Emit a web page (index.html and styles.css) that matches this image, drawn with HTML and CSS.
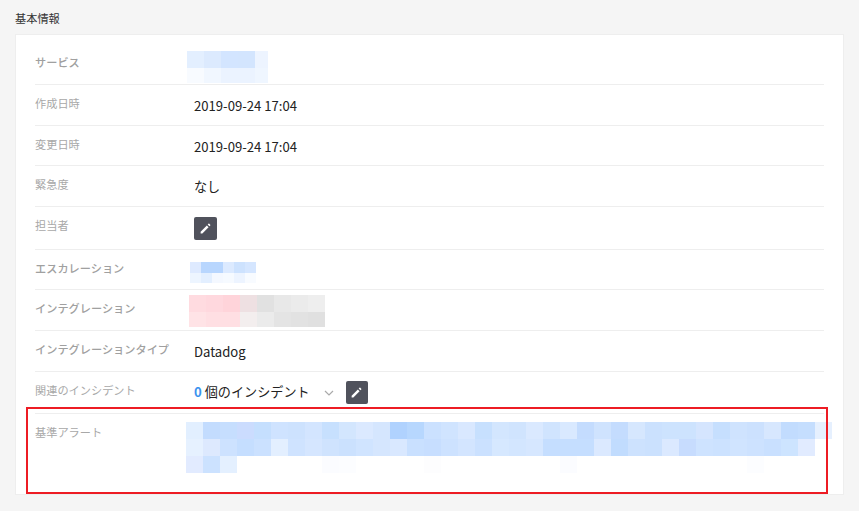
FILE: index.html
```html
<!DOCTYPE html>
<html lang="ja">
<head>
<meta charset="utf-8">
<title>基本情報</title>
<link rel="stylesheet" href="styles.css">
</head>
<body>
<h2 class="title">基本情報</h2>
<section class="card">
  <div class="row">
    <div class="label label-kana">サービス</div>
    <div class="value">
      <svg class="mosaic mosaic-service" width="81" height="32" viewBox="0 0 81 32" shape-rendering="crispEdges" aria-hidden="true">
        <rect x="0" y="0" width="17" height="17" fill="#e3efff"/><rect x="17" y="0" width="17" height="17" fill="#dceafe"/><rect x="34" y="0" width="17" height="17" fill="#d3e5ff"/><rect x="51" y="0" width="17" height="17" fill="#d3e5fe"/><rect x="68" y="0" width="13" height="17" fill="#edf4ff"/>
        <rect x="0" y="17" width="17" height="15" fill="#f8fbff"/><rect x="17" y="17" width="17" height="15" fill="#f1f7ff"/><rect x="34" y="17" width="17" height="15" fill="#ebf3ff"/><rect x="51" y="17" width="17" height="15" fill="#ebf3ff"/><rect x="68" y="17" width="13" height="15" fill="#eff6ff"/>
      </svg>
    </div>
  </div>
  <div class="row">
    <div class="label">作成日時</div>
    <div class="value value-text">2019-09-24 17:04</div>
  </div>
  <div class="row">
    <div class="label">変更日時</div>
    <div class="value value-text">2019-09-24 17:04</div>
  </div>
  <div class="row">
    <div class="label">緊急度</div>
    <div class="value value-text">なし</div>
  </div>
  <div class="row">
    <div class="label">担当者</div>
    <div class="value">
      <button class="edit" type="button" aria-label="編集">
        <svg width="13" height="13" viewBox="0 0 24 24" aria-hidden="true"><path fill="#fff" d="M3 21v-3.2L14.5 6.3l3.2 3.2L6.2 21zM16 4.8l1.6-1.6c.4-.4 1-.4 1.4 0l1.8 1.8c.4.4.4 1 0 1.4L19.2 8z"/></svg>
      </button>
    </div>
  </div>
  <div class="row">
    <div class="label label-kana">エスカレーション</div>
    <div class="value">
      <svg class="mosaic mosaic-escalation" width="66" height="21" viewBox="0 0 66 21" shape-rendering="crispEdges" aria-hidden="true">
        <rect x="0" y="0" width="11" height="11" fill="#deeaff"/><rect x="11" y="0" width="11" height="11" fill="#b8d6fe"/><rect x="22" y="0" width="11" height="11" fill="#b8d6fe"/><rect x="33" y="0" width="11" height="11" fill="#dceaff"/><rect x="44" y="0" width="11" height="11" fill="#cde2fe"/><rect x="55" y="0" width="11" height="11" fill="#d5e6ff"/>
        <rect x="0" y="11" width="11" height="10" fill="#edf5ff"/><rect x="11" y="11" width="11" height="10" fill="#e3efff"/><rect x="22" y="11" width="11" height="10" fill="#f4f8ff"/><rect x="33" y="11" width="11" height="10" fill="#f6faff"/><rect x="44" y="11" width="11" height="10" fill="#edf4ff"/><rect x="55" y="11" width="11" height="10" fill="#f8fbff"/>
      </svg>
    </div>
  </div>
  <div class="row">
    <div class="label label-kana">インテグレーション</div>
    <div class="value">
      <svg class="mosaic mosaic-integration" width="136" height="32" viewBox="0 0 136 32" shape-rendering="crispEdges" aria-hidden="true">
        <rect x="0" y="0" width="17" height="17" fill="#ffdbe0"/><rect x="17" y="0" width="17" height="17" fill="#ffd8de"/><rect x="34" y="0" width="17" height="17" fill="#ffd4da"/><rect x="51" y="0" width="17" height="17" fill="#eee0e2"/><rect x="68" y="0" width="17" height="17" fill="#e1e1e1"/><rect x="85" y="0" width="17" height="17" fill="#e8e8e8"/><rect x="102" y="0" width="17" height="17" fill="#ebebeb"/><rect x="119" y="0" width="17" height="17" fill="#eeeeee"/>
        <rect x="0" y="17" width="17" height="15" fill="#ffe3e6"/><rect x="17" y="17" width="17" height="15" fill="#ffdfe3"/><rect x="34" y="17" width="17" height="15" fill="#ffdfe3"/><rect x="51" y="17" width="17" height="15" fill="#f3eeee"/><rect x="68" y="17" width="17" height="15" fill="#ebebeb"/><rect x="85" y="17" width="17" height="15" fill="#e4e4e4"/><rect x="102" y="17" width="17" height="15" fill="#e2e2e2"/><rect x="119" y="17" width="17" height="15" fill="#e0e0e0"/>
      </svg>
    </div>
  </div>
  <div class="row">
    <div class="label label-kana">インテグレーションタイプ</div>
    <div class="value value-text">Datadog</div>
  </div>
  <div class="row row-related">
    <div class="label">関連のインシデント</div>
    <div class="value value-related">
      <span class="count">0</span>
      <span class="count-text">個のインシデント</span>
      <svg class="chevron" width="10" height="6" viewBox="0 0 10 6" aria-hidden="true"><path d="M1 1l4 4 4-4" fill="none" stroke="#aaa" stroke-width="1.2"/></svg>
      <button class="edit" type="button" aria-label="編集">
        <svg width="13" height="13" viewBox="0 0 24 24" aria-hidden="true"><path fill="#fff" d="M3 21v-3.2L14.5 6.3l3.2 3.2L6.2 21zM16 4.8l1.6-1.6c.4-.4 1-.4 1.4 0l1.8 1.8c.4.4.4 1 0 1.4L19.2 8z"/></svg>
      </button>
    </div>
  </div>
  <div class="row row-last">
    <div class="label">基準アラート</div>
    <div class="value">
      <svg class="mosaic mosaic-alert" width="646" height="51" viewBox="0 0 38 3" preserveAspectRatio="none" shape-rendering="crispEdges" aria-hidden="true">
        <g>
          <rect x="0" y="0" width="1" height="1" fill="#e2efff"/><rect x="1" y="0" width="1" height="1" fill="#c3dcfe"/><rect x="2" y="0" width="1" height="1" fill="#c6defe"/><rect x="3" y="0" width="1" height="1" fill="#cbdcfe"/><rect x="4" y="0" width="1" height="1" fill="#c5dffe"/><rect x="5" y="0" width="1" height="1" fill="#cfe3ff"/><rect x="6" y="0" width="1" height="1" fill="#cde2fe"/><rect x="7" y="0" width="1" height="1" fill="#d3e5ff"/><rect x="8" y="0" width="1" height="1" fill="#c7e0fe"/><rect x="9" y="0" width="1" height="1" fill="#d3e6fe"/><rect x="10" y="0" width="1" height="1" fill="#dbe9ff"/><rect x="11" y="0" width="1" height="1" fill="#d5e6fe"/><rect x="12" y="0" width="1" height="1" fill="#b0d2fe"/><rect x="13" y="0" width="1" height="1" fill="#b7d7fe"/><rect x="14" y="0" width="1" height="1" fill="#cbe1ff"/><rect x="15" y="0" width="1" height="1" fill="#d0e4ff"/><rect x="16" y="0" width="1" height="1" fill="#d9e8ff"/><rect x="17" y="0" width="1" height="1" fill="#c7e0fe"/><rect x="18" y="0" width="1" height="1" fill="#d3e6fe"/><rect x="19" y="0" width="1" height="1" fill="#d0e4fe"/><rect x="20" y="0" width="1" height="1" fill="#dae9ff"/><rect x="21" y="0" width="1" height="1" fill="#d0e4fe"/><rect x="22" y="0" width="1" height="1" fill="#d9e9ff"/><rect x="23" y="0" width="1" height="1" fill="#c4dcfe"/><rect x="24" y="0" width="1" height="1" fill="#cfe3fe"/><rect x="25" y="0" width="1" height="1" fill="#c4dcfe"/><rect x="26" y="0" width="1" height="1" fill="#d6e7fe"/><rect x="27" y="0" width="1" height="1" fill="#cbe1fe"/><rect x="28" y="0" width="1" height="1" fill="#cde3fe"/><rect x="29" y="0" width="1" height="1" fill="#cde3fe"/><rect x="30" y="0" width="1" height="1" fill="#d5e5fe"/><rect x="31" y="0" width="1" height="1" fill="#c6dffe"/><rect x="32" y="0" width="1" height="1" fill="#cfe3fe"/><rect x="33" y="0" width="1" height="1" fill="#cce1fe"/><rect x="34" y="0" width="1" height="1" fill="#d7e7fe"/><rect x="35" y="0" width="1" height="1" fill="#c2dcfe"/><rect x="36" y="0" width="1" height="1" fill="#c5defe"/><rect x="37" y="0" width="1" height="1" fill="#e6f0fe"/>
        </g>
        <g>
          <rect x="0" y="1" width="1" height="1" fill="#e6f1ff"/><rect x="1" y="1" width="1" height="1" fill="#dde9fe"/><rect x="2" y="1" width="1" height="1" fill="#cde2ff"/><rect x="3" y="1" width="1" height="1" fill="#c5deff"/><rect x="4" y="1" width="1" height="1" fill="#cbe1ff"/><rect x="5" y="1" width="1" height="1" fill="#e3efff"/><rect x="6" y="1" width="1" height="1" fill="#cfe3ff"/><rect x="7" y="1" width="1" height="1" fill="#d5e6ff"/><rect x="8" y="1" width="1" height="1" fill="#cfe3fe"/><rect x="9" y="1" width="1" height="1" fill="#cbe1fe"/><rect x="10" y="1" width="1" height="1" fill="#d0e4ff"/><rect x="11" y="1" width="1" height="1" fill="#d5e6fe"/><rect x="12" y="1" width="1" height="1" fill="#d9e8ff"/><rect x="13" y="1" width="1" height="1" fill="#c9e0ff"/><rect x="14" y="1" width="1" height="1" fill="#c7deff"/><rect x="15" y="1" width="1" height="1" fill="#cde2ff"/><rect x="16" y="1" width="1" height="1" fill="#d3e5ff"/><rect x="17" y="1" width="1" height="1" fill="#cbe1ff"/><rect x="18" y="1" width="1" height="1" fill="#d6e8ff"/><rect x="19" y="1" width="1" height="1" fill="#d3e6ff"/><rect x="20" y="1" width="1" height="1" fill="#d6e7ff"/><rect x="21" y="1" width="1" height="1" fill="#c5deff"/><rect x="22" y="1" width="1" height="1" fill="#c5deff"/><rect x="23" y="1" width="1" height="1" fill="#c5deff"/><rect x="24" y="1" width="1" height="1" fill="#dbe9ff"/><rect x="25" y="1" width="1" height="1" fill="#c1dcfe"/><rect x="26" y="1" width="1" height="1" fill="#cde2fe"/><rect x="27" y="1" width="1" height="1" fill="#cbe1fe"/><rect x="28" y="1" width="1" height="1" fill="#dbe9ff"/><rect x="29" y="1" width="1" height="1" fill="#c7dcfe"/><rect x="30" y="1" width="1" height="1" fill="#cee3ff"/><rect x="31" y="1" width="1" height="1" fill="#cce2ff"/><rect x="32" y="1" width="1" height="1" fill="#d0e4ff"/><rect x="33" y="1" width="1" height="1" fill="#cde2ff"/><rect x="34" y="1" width="1" height="1" fill="#c9e0ff"/><rect x="35" y="1" width="1" height="1" fill="#cde4ff"/><rect x="36" y="1" width="1" height="1" fill="#e1ebff"/>
        </g>
        <g>
          <rect x="0" y="2" width="1" height="1" fill="#e2ebff"/><rect x="1" y="2" width="1" height="1" fill="#cce2ff"/><rect x="2" y="2" width="1" height="1" fill="#e4f0ff"/><rect x="8" y="2" width="1" height="1" fill="#fbfcff"/><rect x="9" y="2" width="1" height="1" fill="#fcfdff"/><rect x="14" y="2" width="1" height="1" fill="#fdfdfe"/><rect x="22" y="2" width="1" height="1" fill="#fbfcff"/><rect x="33" y="2" width="1" height="1" fill="#fcfdff"/>
        </g>
      </svg>
    </div>
  </div>
  <div class="highlight"></div>
</section>
</body>
</html>
```

FILE: styles.css
```css
* {
  box-sizing: border-box;
}

html,
body {
  height: 100%;
  overflow: hidden;
}

body {
  margin: 0;
  padding: 8px 15px 0;
  background: #f5f5f5;
  color: #222;
  font-family: "Noto Sans CJK JP", "Noto Sans", sans-serif;
  font-size: 13.12px;
}

.title {
  margin: 0 0 6px;
  font-size: 11.2px;
  font-weight: 400;
  line-height: 20px;
  color: #333;
}

.card {
  position: relative;
  padding: 9.4px 19px 0;
  background: #fff;
  border: 1px solid #eee;
}

.row {
  display: flex;
  align-items: flex-start;
  padding: 10px 0 9px;
  border-bottom: 1px solid #eee;
}

.row-last {
  border-bottom: 0;
  padding-bottom: 20.6px;
}

.label {
  flex: 0 0 159px;
  font-size: 11.2px;
  line-height: 16px;
  color: #a8a8a8;
}

.label-kana {
  color: #a0a0a0;
  font-weight: 500;
}

.value {
  flex: 1;
  min-width: 0;
  line-height: 20.67px;
  color: #222;
}

.value-text {
  padding-top: 1px;
  margin-bottom: -1px;
}

.value-related {
  display: flex;
  align-items: center;
  height: 22.67px;
  margin-top: -0.3px;
}

.count {
  color: #3b93ee;
  font-weight: 700;
  margin-right: 3px;
}

.chevron {
  margin: 0 11.5px 0 14.5px;
}

.edit {
  display: flex;
  align-items: center;
  justify-content: center;
  width: 22.67px;
  height: 22.67px;
  padding: 0;
  border: 0;
  border-radius: 2px;
  background: #50525c;
}

.mosaic {
  display: block;
}

.mosaic-service {
  margin: -3.4px 0 -7.93px -7px;
}

.mosaic-escalation {
  margin: 2px 0 -2.33px -4px;
}

.mosaic-integration {
  margin: -5.4px 0 -5.93px -5px;
}

.mosaic-alert {
  margin: -2px 0 0 -8px;
}

.highlight {
  position: absolute;
  left: 10px;
  right: 15px;
  bottom: 0;
  height: 87px;
  border: 2px solid #ed1c24;
  pointer-events: none;
}
```
